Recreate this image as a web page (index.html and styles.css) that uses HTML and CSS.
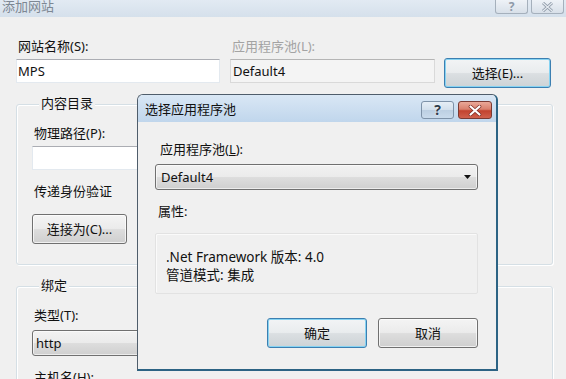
FILE: index.html
```html
<!DOCTYPE html>
<html lang="zh-CN">
<head>
<meta charset="utf-8">
<title>添加网站</title>
<link rel="stylesheet" href="styles.css">
</head>
<body>
<div class="win">
  <div class="titlebar">
    <span class="win-title">添加网站</span>
    <div class="caps">
      <span class="cap cap-help">?</span>
      <span class="cap cap-close">
        <svg width="13" height="10" viewBox="0 0 13 10"><path d="M2 1 L11 9 M11 1 L2 9" stroke="#8e9aa8" stroke-width="3" fill="none"/><path d="M2 1 L11 9 M11 1 L2 9" stroke="#e6ebf1" stroke-width="1.2" fill="none"/></svg>
      </span>
    </div>
  </div>
  <div class="win-body">
    <div class="row1">
      <div class="field f-name">
        <div class="label">网站名称(S):</div>
        <div class="input">MPS</div>
      </div>
      <div class="field f-pool">
        <div class="label disabled">应用程序池(L):</div>
        <div class="input readonly">Default4</div>
      </div>
      <div class="btn focus btn-select">选择(E)...</div>
    </div>
    <div class="group g1">
      <div class="legend">内容目录</div>
      <div class="label l-path">物理路径(P):</div>
      <div class="input i-path"></div>
      <div class="label l-auth">传递身份验证</div>
      <div class="btn btn-connect">连接为(C)...</div>
    </div>
    <div class="group g2">
      <div class="legend">绑定</div>
      <div class="label l-type">类型(T):</div>
      <div class="combo c-type">http</div>
      <div class="label l-host">主机名(H):</div>
    </div>
  </div>
</div>

<div class="dialog">
  <div class="dlg-title">
    <span class="dlg-title-text">选择应用程序池</span>
    <div class="dlg-caps">
      <span class="dcap dcap-help">?</span>
      <span class="dcap dcap-close">
        <svg width="14" height="11" viewBox="0 0 14 11"><path d="M2.5 1.5 L11.5 9.5 M11.5 1.5 L2.5 9.5" stroke="#7a2a22" stroke-width="3.6" fill="none" stroke-linecap="round"/><path d="M2.5 1.5 L11.5 9.5 M11.5 1.5 L2.5 9.5" stroke="#ffffff" stroke-width="2.2" fill="none" stroke-linecap="round"/></svg>
      </span>
    </div>
  </div>
  <div class="dlg-body">
    <div class="label d-label">应用程序池(<u>L</u>):</div>
    <div class="combo d-combo">
      <span>Default4</span>
      <svg class="arrow" width="7" height="4" viewBox="0 0 7 4"><path d="M0 0 L7 0 L3.5 4 Z" fill="#111"/></svg>
    </div>
    <div class="label d-props-label">属性:</div>
    <div class="props">
      <div>.Net Framework 版本: 4.0</div>
      <div>管道模式: 集成</div>
    </div>
    <div class="dlg-buttons">
      <div class="btn focus dbtn">确定</div>
      <div class="btn dbtn">取消</div>
    </div>
  </div>
</div>
</body>
</html>
```

FILE: styles.css
```css
* { box-sizing: border-box; }
html, body { margin: 0; padding: 0; }
body {
  width: 566px;
  height: 379px;
  overflow: hidden;
  position: relative;
  background: #f0f0f0;
  font-family: "Noto Sans", "Noto Sans CJK SC", sans-serif;
  font-size: 13px;
  color: #111;
}

/* background window */
.win { height: 379px; }
.titlebar {
  height: 17px;
  background: linear-gradient(#e2eaf3, #d5e0eb);
  display: flex;
  justify-content: space-between;
  align-items: flex-start;
}
.win-title {
  color: #7d8793;
  padding-left: 2px;
  line-height: 14px;
  margin-top: -1px;
}
.caps { display: flex; gap: 3px; margin-right: 2px; }
.cap {
  width: 33px;
  height: 14px;
  border: 1px solid #a5b0bc;
  border-top: none;
  border-radius: 0 0 3px 3px;
  background: linear-gradient(#eef2f7, #d8e0e9);
  display: flex;
  align-items: center;
  justify-content: center;
  color: #8e9aa8;
  font-weight: bold;
  font-size: 12px;
  line-height: 12px;
}

.win-body { padding: 21px 13px 0 16px; }
.row1 { display: flex; align-items: flex-start; }
.label { line-height: 16px; padding-left: 2px; }
.label.disabled { color: #a3a3a3; }
.field .label { margin-bottom: 5px; }
.f-name { width: 204px; }
.f-pool { width: 205px; margin-left: 10px; }
.input {
  height: 24px;
  line-height: 22px;
  padding-left: 1px;
  background: #fff;
  border: 1px solid #e3e9ef;
  border-top-color: #abadb3;
}
.input.readonly {
  background: #f4f4f4;
  border-color: #d9d9d9;
  border-top-color: #b5b5b5;
  padding-left: 2px;
}

.btn {
  height: 30px;
  border: 1px solid #707070;
  border-radius: 3px;
  background: linear-gradient(#f4f4f4 0%, #ebebeb 48%, #dddddd 52%, #cfcfcf 100%);
  box-shadow: inset 0 0 0 1px rgba(255,255,255,0.7);
  display: flex;
  align-items: center;
  justify-content: center;
  line-height: 16px;
}
.btn.focus {
  border-color: #3c7fb1;
  box-shadow: inset 0 0 0 1px #86d3f2;
  background: linear-gradient(#f2f4f5 0%, #e9ecee 48%, #dbdfe2 52%, #cdd3d6 100%);
}
.btn-select { width: 107px; margin-left: 9px; margin-top: 20px; }

.group {
  border: 1px solid #d5dfe5;
  border-radius: 3px;
  box-shadow: inset 1px 1px 0 #fff, 1px 1px 0 #fff;
  padding: 0 0 20px 15px;
}
.g1 { margin-top: 16px; }
.g2 { margin-top: 21px; padding-bottom: 10px; }
.legend {
  display: table;
  margin: -10px 0 0 7px;
  padding: 0 2px;
  background: #f0f0f0;
  line-height: 16px;
}
.l-path { margin-top: 14px; }
.i-path { margin-top: 5px; width: 400px; }
.l-auth { margin-top: 13px; }
.btn-connect { width: 95px; margin-top: 15px; }
.l-type { margin-top: 14px; }
.c-type { margin-top: 7px; width: 400px; }
.l-host { margin-top: 13px; }

.combo {
  height: 26px;
  border: 1px solid #707070;
  border-radius: 3px;
  background: linear-gradient(#f2f2f2 0%, #ebebeb 48%, #dddddd 52%, #cfcfcf 100%);
  box-shadow: inset 0 0 0 1px rgba(255,255,255,0.6);
  display: flex;
  align-items: center;
  padding-left: 3px;
}

/* modal dialog (overlays window) */
.dialog {
  position: absolute;
  left: 137px;
  top: 94px;
  width: 361px;
  height: 277px;
  background: #f0f0f0;
  border: 1px solid #4f5d6b;
  border-right: 2px solid #2c6384;
  border-bottom: 2px solid #2c6384;
  border-radius: 6px 6px 0 0;
}
.dlg-title {
  height: 27px;
  border-radius: 5px 5px 0 0;
  background: linear-gradient(#d9e7f5, #c0d6ec);
  display: flex;
  justify-content: space-between;
  align-items: flex-start;
  padding-left: 7px;
}
.dlg-title-text { line-height: 16px; margin-top: 6px; color: #111; }
.dlg-caps { display: flex; gap: 4px; margin: 6px 4px 0 0; }
.dcap {
  height: 18px;
  border-radius: 3px;
  display: flex;
  align-items: center;
  justify-content: center;
}
.dcap-help {
  width: 33px;
  border: 1px solid #7e92a8;
  background: linear-gradient(#e6eef6 0%, #d2dfec 50%, #bccfe2 51%, #c9dbec 100%);
  color: #2f3d4c;
  font-weight: bold;
  font-size: 14px;
  line-height: 14px;
  text-shadow: 0 0 2px #fff;
}
.dcap-close {
  width: 34px;
  border: 1px solid #7a3a33;
  background: linear-gradient(#eaa898 0%, #d9806d 45%, #c2432f 55%, #d0614d 100%);
}

.dlg-body { padding: 19px 18px 0 17px; }
.d-label { padding-left: 5px; }
.d-combo {
  margin-top: 7px;
  padding-left: 5px;
  padding-right: 6px;
  justify-content: space-between;
}
.d-props-label { margin-top: 13px; padding-left: 3px; }
.props {
  margin-top: 14px;
  height: 61px;
  border: 1px solid #e2e2e2;
  box-shadow: inset 1px 1px 0 #fafafa;
  border-radius: 2px;
  padding: 14px 10px 0 10px;
  line-height: 18px;
  font-size: 13.5px;
}
.dlg-buttons {
  margin-top: 24px;
  display: flex;
  justify-content: flex-end;
  gap: 11px;
}
.dbtn { width: 100px; }
```
